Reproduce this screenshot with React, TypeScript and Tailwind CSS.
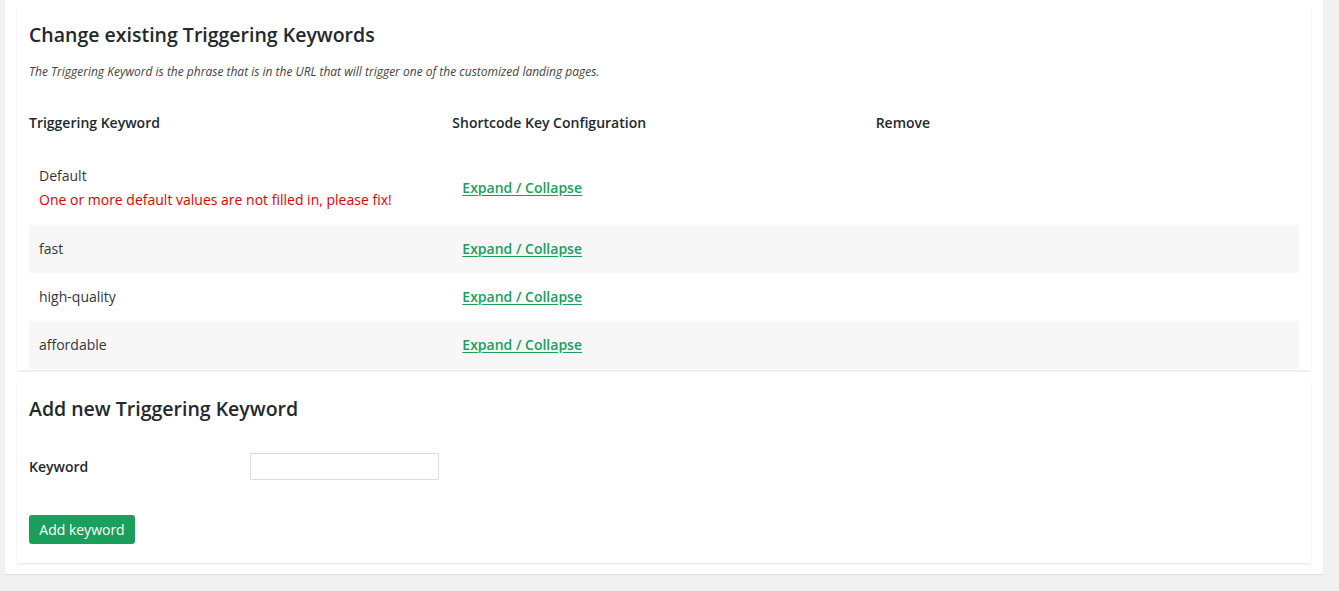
import React from "react";

const rows = [
  { keyword: "Default", error: "One or more default values are not filled in, please fix!" },
  { keyword: "fast" },
  { keyword: "high-quality" },
  { keyword: "affordable" },
];

export default function App() {
  return (
    <div className="min-h-[591px] bg-[#f1f1f1] font-['Open_Sans',sans-serif] text-[#32373c]">
      <div className="ml-[5px] w-[1318px] bg-white px-[12px] pt-[6px] pb-[11px] shadow-[0_1px_1px_rgba(0,0,0,0.08)]">
        {/* existing keywords */}
        <div className="bg-white px-[12px] pt-[15px] pb-[1px] shadow-[0_1px_2px_rgba(0,0,0,0.12)]">
          <h2 className="text-[19.5px] leading-[28px] font-semibold text-[#23282d]">
            Change existing Triggering Keywords
          </h2>
          <p className="mt-[14px] text-[12px] leading-[18px] italic text-[#444]">
            The Triggering Keyword is the phrase that is in the URL that will trigger one of the customized landing pages.
          </p>
          <div className="mt-[28px] grid grid-cols-3 pb-[14px] text-[14px] leading-[28px] font-semibold text-[#23282d]">
            <div>Triggering Keyword</div>
            <div>Shortcode Key Configuration</div>
            <div>Remove</div>
          </div>
          {rows.map((row, i) => (
            <div
              key={row.keyword}
              className={
                "grid grid-cols-3 items-center text-[14px] " +
                (i % 2 === 1 ? "bg-[#f7f7f7] " : "bg-white ") +
                (row.error ? "py-[13px]" : "h-[48px]")
              }
            >
              <div className="px-[10px] leading-[24px]">
                <div>{row.keyword}</div>
                {row.error && <div className="text-[#e00000]">{row.error}</div>}
              </div>
              <div className="px-[10px] leading-[24px]">
                <a href="#" className="font-semibold text-[#1a9f5c] underline underline-offset-2">
                  Expand / Collapse
                </a>
              </div>
              <div />
            </div>
          ))}
        </div>

        {/* add keyword */}
        <div className="mt-[10px] bg-white px-[12px] pt-[15px] pb-[19px] shadow-[0_1px_2px_rgba(0,0,0,0.12)]">
          <h2 className="text-[19.5px] leading-[28px] font-semibold text-[#23282d]">
            Add new Triggering Keyword
          </h2>
          <div className="mt-[30px] flex items-center">
            <label className="w-[221px] text-[14px] font-semibold text-[#23282d]">Keyword</label>
            <input
              type="text"
              className="h-[27px] w-[189px] border border-[#ddd] bg-white px-2 text-[14px] outline-none"
            />
          </div>
          <button className="mt-[35px] h-[29px] w-[106px] rounded-[3px] bg-[#1a9f5c] text-[14px] text-white">
            Add keyword
          </button>
        </div>
      </div>
    </div>
  );
}
